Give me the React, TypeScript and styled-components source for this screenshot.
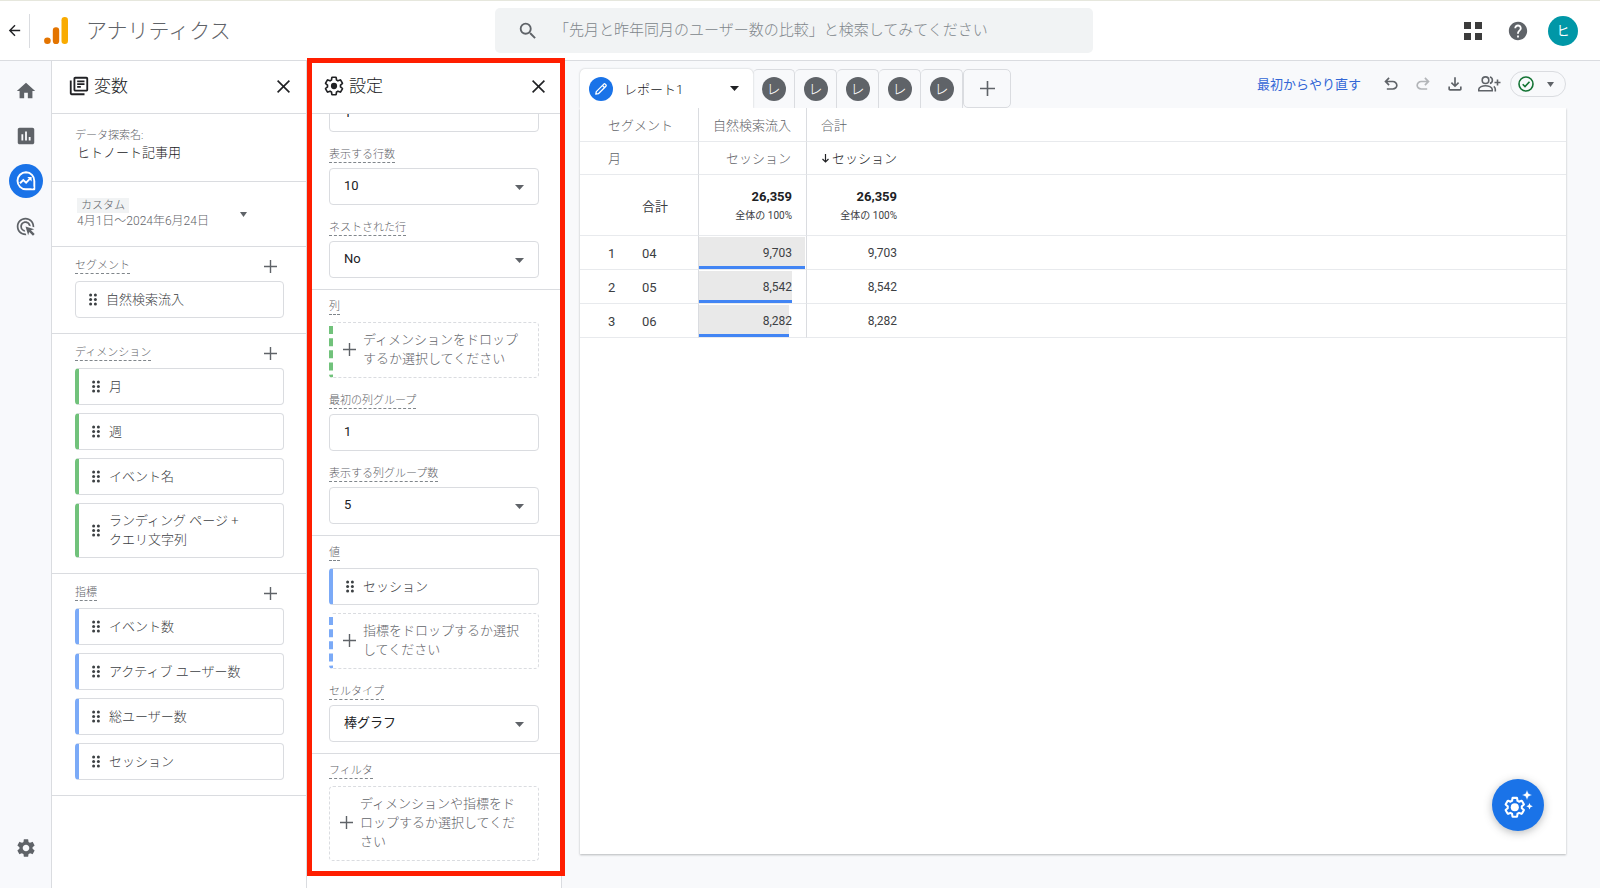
import React, { useState } from 'react';
import styled, { createGlobalStyle, css } from 'styled-components';
import {
  MdAdsClick,
  MdArrowBack,
  MdHelp,
  MdHome,
  MdInsertChart,
  MdOutlineLibraryBooks,
  MdSearch,
  MdSettings,
} from 'react-icons/md';

const color = {
  line: '#dadce0',
  softLine: '#e8eaed',
  text: '#3c4043',
  strong: '#202124',
  muted: '#5f6368',
  faint: '#80868b',
  canvas: '#f8f9fb',
  blue: '#1a73e8',
  metric: '#7baaf7',
  dimension: '#71c27b',
};

const GlobalStyle = createGlobalStyle`
  *, *::before, *::after { box-sizing: border-box; }
  body {
    margin: 0;
    background: ${color.canvas};
    color: ${color.text};
    font-family: Roboto, 'Noto Sans CJK JP', sans-serif;
    font-size: 13px;
    font-weight: 300;
    line-height: 19px;
  }
  button, input, select { font: inherit; color: inherit; }
  h1, h2, h3, p { margin: 0; font-weight: inherit; }
`;

/* ---------- page frame ---------- */

const Page = styled.div`
  display: flex;
  flex-direction: column;
  min-height: 100vh;
`;

const Workspace = styled.div`
  display: flex;
  flex: 1;
`;

const IconButton = styled.button`
  display: flex;
  align-items: center;
  justify-content: center;
  flex: none;
  padding: 0;
  border: 0;
  background: none;
  color: ${color.muted};
  cursor: pointer;
`;

/* ---------- top bar ---------- */

const TopBar = styled.header`
  display: grid;
  grid-template-columns: minmax(250px, 495fr) minmax(0, 598fr) minmax(160px, 507fr);
  align-items: center;
  height: 61px;
  border-top: 1px solid #e6e7dd;
  border-bottom: 1px solid ${color.line};
  background: #fff;
`;

const Brand = styled.div`
  display: flex;
  align-items: center;
  padding-left: 6px;
`;

const BrandDivider = styled.span`
  width: 1px;
  height: 34px;
  margin: 0 14px 0 6px;
  background: ${color.line};
`;

const BrandName = styled.h1`
  margin-left: 18px;
  font-size: 21px;
  line-height: 30px;
  color: ${color.muted};
`;

const SearchBox = styled.label`
  display: flex;
  align-items: center;
  gap: 15px;
  height: 45px;
  padding: 0 22px;
  border-radius: 5px;
  background: #f1f3f4;
  color: ${color.muted};
`;

const SearchInput = styled.input`
  flex: 1;
  min-width: 0;
  padding: 0;
  border: 0;
  outline: 0;
  background: none;
  font-size: 15px;
  &::placeholder { color: ${color.faint}; opacity: 1; }
`;

const Account = styled.div`
  display: flex;
  align-items: center;
  justify-content: flex-end;
  padding-right: 22px;
`;

const HelpButton = styled(IconButton)`
  margin: 0 19px 0 25px;
`;

const Avatar = styled.button`
  width: 30px;
  height: 30px;
  padding: 0;
  border: 0;
  border-radius: 50%;
  background: #0097a7;
  color: #fff;
  font-size: 13px;
  font-weight: 400;
`;

/* ---------- left rail ---------- */

const Rail = styled.nav`
  display: flex;
  flex-direction: column;
  align-items: center;
  gap: 11px;
  flex: none;
  width: 52px;
  padding: 13px 0 23px;
  border-right: 1px solid ${color.line};
  background: #f8f9fc;
`;

const RailLink = styled.a<{ $active?: boolean; $last?: boolean }>`
  display: flex;
  align-items: center;
  justify-content: center;
  width: 34px;
  height: 34px;
  border-radius: 50%;
  color: ${(p) => (p.$active ? '#fff' : color.muted)};
  background: ${(p) => (p.$active ? color.blue : 'transparent')};
  ${(p) => p.$last && css`margin-top: auto;`}
`;

/* ---------- side panels ---------- */

const Panel = styled.section`
  position: relative;
  flex: none;
  width: 255px;
  border-right: 1px solid ${color.line};
  background: #fff;
`;

const PanelHeader = styled.header`
  display: flex;
  align-items: center;
  height: 53px;
  padding: 0 16px 2px;
  border-bottom: 1px solid ${color.line};
  color: ${color.strong};
`;

const PanelTitle = styled.h2`
  flex: 1;
  margin-left: 4px;
  font-size: 17px;
  line-height: 24px;
`;

const Group = styled.div<{ $top?: number; $bottom?: number; $last?: boolean }>`
  padding: ${(p) => p.$top ?? 11}px 22px ${(p) => p.$bottom ?? 15}px 23px;
  border-bottom: ${(p) => (p.$last ? 0 : 1)}px solid ${color.line};
`;

const GroupHeader = styled.div`
  display: flex;
  align-items: center;
  justify-content: space-between;
  height: 16px;
  margin-bottom: 7px;
  padding-right: 7px;
`;

const Caption = styled.label`
  display: block;
  width: fit-content;
  border-bottom: 1px dashed ${color.faint};
  font-size: 11px;
  line-height: 15px;
  color: ${color.muted};
`;

const GroupCaption = styled(Caption)`
  margin-bottom: 7px;
`;

const FieldCaption = styled(Caption)`
  margin: 15px 0 5px;
`;

const NameGroup = styled(Group)`
  height: 68px;
`;

const NameCaption = styled.label`
  display: block;
  font-size: 11px;
  line-height: 15px;
  color: ${color.muted};
`;

const NameInput = styled.input`
  display: block;
  width: 100%;
  height: 19px;
  padding: 0 0 0 2px;
  border: 0;
  outline: 0;
  background: none;
  color: ${color.strong};
`;

const DateButton = styled.button`
  display: flex;
  align-items: center;
  gap: 31px;
  padding: 0 0 0 2px;
  border: 0;
  background: none;
  text-align: left;
  color: ${color.muted};
`;

const DateBadge = styled.span`
  display: block;
  width: fit-content;
  padding: 0 4px;
  background: #f1f3f4;
  font-size: 11px;
  line-height: 15px;
`;

const DateRange = styled.span`
  display: block;
  font-size: 12px;
  line-height: 17px;
`;

const Stack = styled.div`
  display: flex;
  flex-direction: column;
  gap: 8px;
`;

const Chip = styled.div<{ $accent?: string }>`
  display: flex;
  align-items: center;
  gap: 9px;
  min-height: 37px;
  padding: 7px 13px 8px;
  border: 1px solid ${color.line};
  border-radius: 4px;
  color: ${color.text};
  ${(p) => p.$accent && css`border-left: 4px solid ${p.$accent};`}
`;

const ChipText = styled.span`
  white-space: pre-line;
`;

const DropZone = styled.button<{ $accent?: string }>`
  display: flex;
  align-items: center;
  gap: 7px;
  width: 100%;
  padding: 7px 12px 9px 10px;
  border: 1px dashed ${color.line};
  border-radius: 4px;
  background: none;
  text-align: left;
  color: ${color.muted};
  ${(p) => p.$accent && css`border-left: 4px dashed ${p.$accent};`}
`;

const fieldBox = css`
  display: block;
  width: 100%;
  height: 37px;
  padding: 0 14px 2px;
  border: 1px solid ${color.line};
  border-radius: 4px;
  outline: 0;
  background: #fff;
  color: ${color.strong};
  font-weight: 400;
`;

const TextField = styled.input`
  ${fieldBox}
`;

const SelectShell = styled.div`
  position: relative;
  color: ${color.muted};
  svg {
    position: absolute;
    top: 17px;
    right: 15px;
    pointer-events: none;
  }
`;

const SelectField = styled.select`
  ${fieldBox}
  appearance: none;
`;

const SettingsScroll = styled.div`
  overflow: hidden;
`;

/* The list is scrolled part of the way down, so its first field is cut off. */
const ScrolledList = styled.div`
  margin-top: -19px;
`;

const SettingsGroup = styled(Group)`
  padding-left: 22px;
  padding-right: 22px;
`;

const Highlight = styled.div`
  position: absolute;
  inset: -3px -4px 12px 0;
  border: 5px solid #ff1e00;
  pointer-events: none;
  z-index: 2;
`;

/* ---------- report area ---------- */

const Main = styled.main`
  display: flex;
  flex-direction: column;
  flex: 1;
  min-width: 0;
  padding: 0 34px 34px 18px;
`;

const ReportBar = styled.div`
  display: flex;
  align-items: flex-end;
  justify-content: space-between;
  height: 47px;
`;

const Tabs = styled.div`
  display: flex;
  height: 39px;
`;

const ActiveTab = styled.button`
  display: flex;
  align-items: center;
  width: 173px;
  padding: 0 14px 0 9px;
  border: 0;
  border-radius: 5px 5px 0 0;
  background: #fff;
  box-shadow: 0 0 2px rgba(60, 64, 67, 0.3);
  clip-path: inset(-3px -3px 0 -3px);
  color: ${color.strong};
`;

const TabLabel = styled.span`
  flex: 1;
  margin-left: 11px;
  padding-top: 2px;
  text-align: left;
`;

const Badge = styled.span<{ $active?: boolean }>`
  display: flex;
  align-items: center;
  justify-content: center;
  width: 24px;
  height: 24px;
  border-radius: 50%;
  background: ${(p) => (p.$active ? color.blue : color.muted)};
  color: #fff;
  font-size: 14px;
`;

const Tab = styled.button`
  display: flex;
  align-items: center;
  justify-content: center;
  width: 42px;
  padding: 0;
  border: 1px solid ${color.line};
  border-width: 1px 1px 0 0;
  border-radius: 5px 5px 0 0;
  background: ${color.canvas};
`;

const AddTab = styled(Tab)`
  width: 48px;
  border: 1px solid ${color.line};
  border-radius: 5px;
  color: ${color.muted};
`;

const Tools = styled.div`
  display: flex;
  align-items: center;
  height: 26px;
  margin-bottom: 11px;
  color: ${color.muted};
`;

const ResetLink = styled.a`
  margin-right: 20px;
  color: #3367d6;
  font-weight: 400;
  text-decoration: none;
  white-space: nowrap;
`;

const ToolGroup = styled.div`
  display: flex;
  align-items: center;
  gap: 12px;
  margin-right: 9px;
`;

const ToolButton = styled(IconButton)<{ $dim?: boolean }>`
  height: 20px;
  opacity: ${(p) => (p.$dim ? 0.45 : 1)};
`;

const StatusPill = styled.button`
  display: flex;
  align-items: center;
  gap: 13px;
  width: 56px;
  height: 26px;
  padding: 0 6px 0 7px;
  border: 1px solid ${color.line};
  border-radius: 13px;
  background: none;
  color: ${color.muted};
`;

const Sheet = styled.div`
  flex: 1;
  overflow-x: auto;
  background: #fff;
  box-shadow: 0 1px 2px rgba(60, 64, 67, 0.35);
  clip-path: inset(0 -4px -4px -4px);
`;

const Table = styled.table`
  width: 100%;
  table-layout: fixed;
  border-collapse: separate;
  border-spacing: 0;
`;

const Row = styled.tr<{ $height: number }>`
  height: ${(p) => p.$height}px;
`;

const cell = css<{ $align?: 'left' | 'right'; $rule?: boolean }>`
  position: relative;
  padding: 1px 15px 0 14px;
  border-bottom: 1px solid ${color.softLine};
  ${(p) => p.$rule && css`border-right: 1px solid ${color.line};`}
  text-align: ${(p) => p.$align ?? 'left'};
  font-weight: 300;
  white-space: nowrap;
`;

const HeadCell = styled.th<{ $lead?: boolean; $sorted?: boolean; $align?: 'left' | 'right'; $rule?: boolean }>`
  ${cell}
  color: ${(p) => (p.$sorted ? color.strong : color.muted)};
  ${(p) => p.$lead && css`padding-left: 28px;`}
  ${(p) => p.$sorted && css`padding-left: 0; padding-right: 0;`}
`;

const IndexCell = styled.td`
  ${cell}
  padding: 2px 0 0 28px;
  font-weight: 400;
`;

const NameCell = styled.th`
  ${cell}
  padding: 2px 0 0;
  font-weight: 400;
`;

const ValueCell = styled.td<{ $edge?: boolean }>`
  ${cell}
  padding: 2px 14px 0 0;
  font-size: 12px;
  font-weight: 400;
  ${(p) => p.$edge && css`padding-right: 0;`}
`;

const Bar = styled.span`
  position: absolute;
  inset: 1px auto 0 0;
  border-bottom: 3px solid #4285f4;
  background: #e9e9e9;
`;

const BarTrack = styled.span`
  position: absolute;
  inset: 0 1px 0 0;
`;

const BarValue = styled.span`
  position: relative;
`;

const Total = styled.strong`
  display: block;
  font-size: 13px;
  font-weight: 700;
  color: ${color.strong};
`;

const Share = styled.span`
  display: block;
  font-size: 10px;
`;

const Fab = styled.button`
  position: fixed;
  right: 56px;
  bottom: 57px;
  display: flex;
  align-items: center;
  justify-content: center;
  width: 52px;
  height: 52px;
  padding: 0;
  border: 0;
  border-radius: 50%;
  background: ${color.blue};
  box-shadow: 0 2px 8px rgba(60, 64, 67, 0.35);
`;

/* ---------- drawings ---------- */

const Logo = () => (
  <svg width="24" height="28" viewBox="0 0 24 28" aria-hidden="true">
    <rect x="17.500" y="0" width="6.500" height="27" rx="3.200" fill="#f9ab00" />
    <rect x="8.800" y="10.300" width="6.400" height="16.700" rx="3.100" fill="#e37400" />
    <circle cx="3.400" cy="23.700" r="3.300" fill="#e37400" />
  </svg>
);

const Plus = ({ size = 13 }: { size?: number }) => (
  <svg width={size} height={size} viewBox="0 0 13 13" stroke={color.muted} strokeWidth="1.4" aria-hidden="true">
    <path d="M6.5 0v13M0 6.5h13" />
  </svg>
);

const Cross = () => (
  <svg width="13" height="13" viewBox="0 0 13 13" stroke={color.strong} strokeWidth="1.6" aria-hidden="true">
    <path d="M.6.6l11.8 11.8M12.4.6L.6 12.4" />
  </svg>
);

const Caret = ({ width = 9 }: { width?: number }) => (
  <svg width={width} height="5" viewBox="0 0 10 5" preserveAspectRatio="none" fill="currentColor" aria-hidden="true">
    <path d="M0 0h10L5 5z" />
  </svg>
);

const Grip = () => (
  <svg width="8" height="13" viewBox="0 0 8 13" fill={color.text} aria-hidden="true">
    {[2, 6.5, 11].map((y) => (
      <g key={y}>
        <circle cx="1.6" cy={y} r="1.5" />
        <circle cx="6.4" cy={y} r="1.5" />
      </g>
    ))}
  </svg>
);

const gearPath =
  'M19.43 12.98c.04-.32.07-.64.07-.98s-.03-.66-.07-.98l2.11-1.65c.19-.15.24-.42.12-.64l-2-3.46c-.09-.16-.26-.25-.44-.25-.06 0-.12.01-.17.03l-2.49 1c-.52-.4-1.08-.73-1.69-.98l-.38-2.65C14.46 2.18 14.25 2 14 2h-4c-.25 0-.46.18-.49.42l-.38 2.65c-.61.25-1.17.59-1.69.98l-2.49-1c-.06-.02-.12-.03-.18-.03-.17 0-.34.09-.43.25l-2 3.46c-.13.22-.07.49.12.64l2.11 1.65c-.04.32-.07.65-.07.98s.03.66.07.98l-2.11 1.65c-.19.15-.24.42-.12.64l2 3.46c.09.16.26.25.44.25.06 0 .12-.01.17-.03l2.49-1c.52.4 1.08.73 1.69.98l.38 2.65c.03.24.24.42.49.42h4c.25 0 .46-.18.49-.42l.38-2.65c.61-.25 1.17-.59 1.69-.98l2.49 1c.06.02.12.03.18.03.17 0 .34-.09.43-.25l2-3.46c.12-.22.07-.49-.12-.64z';

const OutlineGear = () => (
  <svg width="22" height="22" viewBox="0 0 24 24" aria-hidden="true">
    <g transform="translate(.6 .6) scale(.95)">
      <path d={gearPath} fill="none" stroke={color.strong} strokeWidth="1.900" strokeLinejoin="round" />
      <circle cx="12" cy="12" r="3.600" fill={color.strong} />
    </g>
  </svg>
);

const SparkGear = () => (
  <svg width="30" height="30" viewBox="0 0 30 30" aria-hidden="true">
    <g transform="translate(0.5 6) scale(.94)">
      <path d={gearPath} fill="none" stroke="#fff" strokeWidth="2.2" strokeLinejoin="round" />
      <circle cx="12" cy="12" r="4.3" fill="#fff" />
    </g>
    <path d="M24 0l1.5 3.5L29 5l-3.500 1.500L24 10l-1.500-3.500L19 5l3.500-1.500z" fill="#fff" stroke={color.blue} strokeWidth=".4" />
    <path d="M26.500 13l1 2.200 2.300 1-2.300 1-1 2.300-1-2.300-2.200-1 2.200-1z" fill="#fff" />
  </svg>
);

const ExploreIcon = () => (
  <svg width="20" height="20" viewBox="0 0 20 20" fill="none" stroke="#fff" aria-hidden="true">
    <path d="M10 1.300a8.500 8.500 0 1 0 0 17h8.300V10A8.500 8.500 0 0 0 10 1.300z" strokeWidth="1.900" strokeLinejoin="round" />
    <path d="M4 12.200l3.300-3.200 2.800 2.600 4.400-4.500" strokeWidth="1.900" />
    <path d="M11.300 6.100h4.300v4.300z" fill="#fff" stroke="none" />
    <circle cx="16.200" cy="16.300" r="1.200" fill={color.blue} stroke="none" />
  </svg>
);

const AppsIcon = () => (
  <svg width="18" height="18" viewBox="0 0 18 18" fill="#3c3c3c" aria-hidden="true">
    <path d="M0 0h7v7H0zM11 0h7v7h-7zM0 11h7v7H0zM11 11h7v7h-7z" />
  </svg>
);

const PencilIcon = () => (
  <svg width="14" height="14" viewBox="0 0 14 14" fill="none" stroke="#fff" strokeWidth="1.300" aria-hidden="true">
    <path d="M1.800 12.200l.5-2.600 7.500-7.500a1 1 0 0 1 1.400 0l.7.700a1 1 0 0 1 0 1.400l-7.500 7.500z" strokeLinejoin="round" />
    <path d="M8.500 3.500l2 2" />
  </svg>
);

const Symbol = ({ d, size = 20, flip }: { d: string; size?: number; flip?: boolean }) => (
  <svg width={size} height={size} viewBox="0 -960 960 960" fill="currentColor" aria-hidden="true">
    <path d={d} transform={flip ? 'translate(960 0) scale(-1 1)' : undefined} />
  </svg>
);

const undoPath =
  'M280-200v-80h284q63 0 109.500-40T720-420q0-60-46.500-100T564-560H312l104 104-56 56-200-200 200-200 56 56-104 104h252q97 0 163.500 63T800-420q0 94-66.500 157T564-200H280Z';
const downloadPath =
  'M480-320 280-520l56-58 104 104v-326h80v326l104-104 56 58-200 200ZM240-160q-33 0-56.500-23.500T160-240v-120h80v120h480v-120h80v120q0 33-23.500 56.500T720-160H240Z';

const PeopleIcon = () => (
  <svg width="24" height="18" viewBox="0 0 24 18" fill="none" stroke="currentColor" strokeWidth="1.600" aria-hidden="true">
    <circle cx="8.500" cy="5.200" r="3.300" />
    <path d="M1.800 15.700v-1.400c0-2.300 3.900-3.600 6.700-3.600s6.700 1.300 6.700 3.600v1.400z" />
    <path d="M12.900 2a3.300 3.300 0 0 1 0 6.400M16.800 11.300c1 .8 1.500 1.800 1.500 3v2.200M20.500 4.500v6M17.500 7.500h6" />
  </svg>
);

const CheckCircle = () => (
  <svg width="16" height="16" viewBox="0 0 16 16" fill="none" stroke="#137333" strokeWidth="1.600" aria-hidden="true">
    <circle cx="8" cy="8" r="7" />
    <path d="M4.700 8.200l2.300 2.300 4.500-4.700" />
  </svg>
);

const SortArrow = () => (
  <svg width="7" height="9" viewBox="0 0 7 9" fill="none" stroke="currentColor" strokeWidth="1.200" aria-hidden="true">
    <path d="M3.500 0v8M.5 5l3 3 3-3" />
  </svg>
);

/* ---------- pieces ---------- */

interface ChipGroupProps {
  title: string;
  items: string[];
  accent?: string;
}

const ChipGroup = ({ title, items, accent }: ChipGroupProps) => (
  <Group>
    <GroupHeader>
      <Caption as="h3">{title}</Caption>
      <IconButton aria-label={`${title}を追加`}>
        <Plus />
      </IconButton>
    </GroupHeader>
    <Stack>
      {items.map((item) => (
        <Chip key={item} $accent={accent}>
          <Grip />
          <ChipText>{item}</ChipText>
        </Chip>
      ))}
    </Stack>
  </Group>
);

interface SelectProps {
  id: string;
  label: string;
  options: string[];
  initial: string;
}

const Select = ({ id, label, options, initial }: SelectProps) => {
  const [value, setValue] = useState(initial);
  return (
    <>
      <FieldCaption htmlFor={id}>{label}</FieldCaption>
      <SelectShell>
        <SelectField id={id} value={value} onChange={(e) => setValue(e.target.value)}>
          {options.map((o) => (
            <option key={o}>{o}</option>
          ))}
        </SelectField>
        <Caret />
      </SelectShell>
    </>
  );
};

const IconSlot = styled.span`
  display: flex;
  flex: none;
`;

const Drop = ({ text, accent }: { text: string; accent?: string }) => (
  <DropZone $accent={accent}>
    <IconSlot>
      <Plus />
    </IconSlot>
    <span>{text}</span>
  </DropZone>
);

const rows = [
  { month: '04', sessions: 9703 },
  { month: '05', sessions: 8542 },
  { month: '06', sessions: 8282 },
];
const peak = Math.max(...rows.map((r) => r.sessions));

const IndexCol = styled.col`
  width: 62px;
`;
const NameCol = styled.col`
  width: 57px;
`;
const SegmentCol = styled.col`
  width: 108px;
`;
const TotalCol = styled.col`
  width: 90px;
`;

const ReportTable = () => (
  <Table>
    <colgroup>
      <IndexCol />
      <NameCol />
      <SegmentCol />
      <TotalCol />
      <col />
    </colgroup>
    <thead>
      <Row $height={34}>
        <HeadCell colSpan={2} $lead $rule>セグメント</HeadCell>
        <HeadCell $align="right" $rule>自然検索流入</HeadCell>
        <HeadCell colSpan={2}>合計</HeadCell>
      </Row>
      <Row $height={33}>
        <HeadCell colSpan={2} $lead $rule>月</HeadCell>
        <HeadCell $align="right" $rule>セッション</HeadCell>
        <HeadCell $align="right" $sorted>
          <SortArrow /> セッション
        </HeadCell>
        <HeadCell as="td" />
      </Row>
    </thead>
    <tbody>
      <Row $height={61}>
        <IndexCell />
        <NameCell scope="row" $rule>合計</NameCell>
        <ValueCell $align="right" $rule>
          <Total>26,359</Total>
          <Share>全体の 100%</Share>
        </ValueCell>
        <ValueCell $align="right" $edge>
          <Total>26,359</Total>
          <Share>全体の 100%</Share>
        </ValueCell>
        <ValueCell />
      </Row>
      {rows.map((r, i) => (
        <Row key={r.month} $height={34}>
          <IndexCell>{i + 1}</IndexCell>
          <NameCell scope="row" $rule>{r.month}</NameCell>
          <ValueCell $align="right" $rule>
            <BarTrack>
              <Bar style={{ width: `${(r.sessions / peak) * 100}%` }} />
            </BarTrack>
            <BarValue>{r.sessions.toLocaleString('en-US')}</BarValue>
          </ValueCell>
          <ValueCell $align="right" $edge>{r.sessions.toLocaleString('en-US')}</ValueCell>
          <ValueCell />
        </Row>
      ))}
    </tbody>
  </Table>
);

export default function App() {
  return (
    <>
      <GlobalStyle />
      <Page>
        <TopBar>
          <Brand>
            <IconButton aria-label="戻る">
              <MdArrowBack size={17} color={color.strong} />
            </IconButton>
            <BrandDivider />
            <Logo />
            <BrandName>アナリティクス</BrandName>
          </Brand>
          <SearchBox>
            <MdSearch size={22} />
            <SearchInput
              type="search"
              aria-label="検索"
              placeholder="「先月と昨年同月のユーザー数の比較」と検索してみてください"
            />
          </SearchBox>
          <Account>
            <IconButton aria-label="アプリ">
              <AppsIcon />
            </IconButton>
            <HelpButton aria-label="ヘルプ">
              <MdHelp size={22} />
            </HelpButton>
            <Avatar>ヒ</Avatar>
          </Account>
        </TopBar>

        <Workspace>
          <Rail>
            <RailLink href="#home" aria-label="ホーム">
              <MdHome size={22} />
            </RailLink>
            <RailLink href="#reports" aria-label="レポート">
              <MdInsertChart size={22} />
            </RailLink>
            <RailLink href="#explore" aria-label="探索" $active>
              <ExploreIcon />
            </RailLink>
            <RailLink href="#ads" aria-label="広告">
              <MdAdsClick size={21} />
            </RailLink>
            <RailLink href="#admin" aria-label="管理" $last>
              <MdSettings size={22} />
            </RailLink>
          </Rail>

          <Panel>
            <PanelHeader>
              <MdOutlineLibraryBooks size={22} />
              <PanelTitle>変数</PanelTitle>
              <IconButton aria-label="閉じる">
                <Cross />
              </IconButton>
            </PanelHeader>
            <NameGroup $top={14}>
              <NameCaption htmlFor="exploration">データ探索名:</NameCaption>
              <NameInput id="exploration" defaultValue="ヒトノート記事用" />
            </NameGroup>
            <Group $top={16} $bottom={16}>
              <DateButton>
                <span>
                  <DateBadge>カスタム</DateBadge>
                  <DateRange>4月1日～2024年6月24日</DateRange>
                </span>
                <Caret width={7} />
              </DateButton>
            </Group>
            <ChipGroup title="セグメント" items={['自然検索流入']} />
            <ChipGroup
              title="ディメンション"
              accent={color.dimension}
              items={['月', '週', 'イベント名', 'ランディング ページ +\nクエリ文字列']}
            />
            <ChipGroup
              title="指標"
              accent={color.metric}
              items={['イベント数', 'アクティブ ユーザー数', '総ユーザー数', 'セッション']}
            />
          </Panel>

          <Panel>
            <PanelHeader>
              <OutlineGear />
              <PanelTitle>設定</PanelTitle>
              <IconButton aria-label="閉じる">
                <Cross />
              </IconButton>
            </PanelHeader>
            <SettingsScroll>
              <ScrolledList>
                <SettingsGroup $top={0} $bottom={11}>
                  <TextField aria-label="最初の行" defaultValue="1" />
                  <Select id="row-count" label="表示する行数" options={['10', '25', '50']} initial="10" />
                  <Select id="nested" label="ネストされた行" options={['No', 'Yes']} initial="No" />
                </SettingsGroup>
                <SettingsGroup $top={9} $bottom={11}>
                  <GroupCaption as="h3">列</GroupCaption>
                  <Drop accent={color.dimension} text="ディメンションをドロップするか選択してください" />
                  <FieldCaption htmlFor="first-group">最初の列グループ</FieldCaption>
                  <TextField id="first-group" defaultValue="1" />
                  <Select id="group-count" label="表示する列グループ数" options={['5', '10', '15']} initial="5" />
                </SettingsGroup>
                <SettingsGroup $top={9} $bottom={11}>
                  <GroupCaption as="h3">値</GroupCaption>
                  <Stack>
                    <Chip $accent={color.metric}>
                      <Grip />
                      <ChipText>セッション</ChipText>
                    </Chip>
                    <Drop accent={color.metric} text="指標をドロップするか選択してください" />
                  </Stack>
                  <Select
                    id="cell-type"
                    label="セルタイプ"
                    options={['棒グラフ', '書式なしテキスト', 'ヒートマップ']}
                    initial="棒グラフ"
                  />
                </SettingsGroup>
                <SettingsGroup $top={9} $last>
                  <GroupCaption as="h3">フィルタ</GroupCaption>
                  <Drop text="ディメンションや指標をドロップするか選択してください" />
                </SettingsGroup>
              </ScrolledList>
            </SettingsScroll>
            <Highlight />
          </Panel>

          <Main>
            <ReportBar>
              <Tabs>
                <ActiveTab>
                  <Badge $active>
                    <PencilIcon />
                  </Badge>
                  <TabLabel>レポート1</TabLabel>
                  <Caret width={9} />
                </ActiveTab>
                {[2, 3, 4, 5, 6].map((n) => (
                  <Tab key={n}>
                    <Badge>レ</Badge>
                  </Tab>
                ))}
                <AddTab aria-label="タブを追加">
                  <Plus size={15} />
                </AddTab>
              </Tabs>
              <Tools>
                <ResetLink href="#reset">最初からやり直す</ResetLink>
                <ToolGroup>
                  <ToolButton aria-label="元に戻す">
                    <Symbol d={undoPath} />
                  </ToolButton>
                  <ToolButton aria-label="やり直す" $dim>
                    <Symbol d={undoPath} flip />
                  </ToolButton>
                  <ToolButton aria-label="ダウンロード">
                    <Symbol d={downloadPath} />
                  </ToolButton>
                  <ToolButton aria-label="共有">
                    <PeopleIcon />
                  </ToolButton>
                </ToolGroup>
                <StatusPill aria-label="ステータス">
                  <CheckCircle />
                  <Caret width={7} />
                </StatusPill>
              </Tools>
            </ReportBar>
            <Sheet>
              <ReportTable />
            </Sheet>
          </Main>
        </Workspace>
        <Fab aria-label="分析情報">
          <SparkGear />
        </Fab>
      </Page>
    </>
  );
}
